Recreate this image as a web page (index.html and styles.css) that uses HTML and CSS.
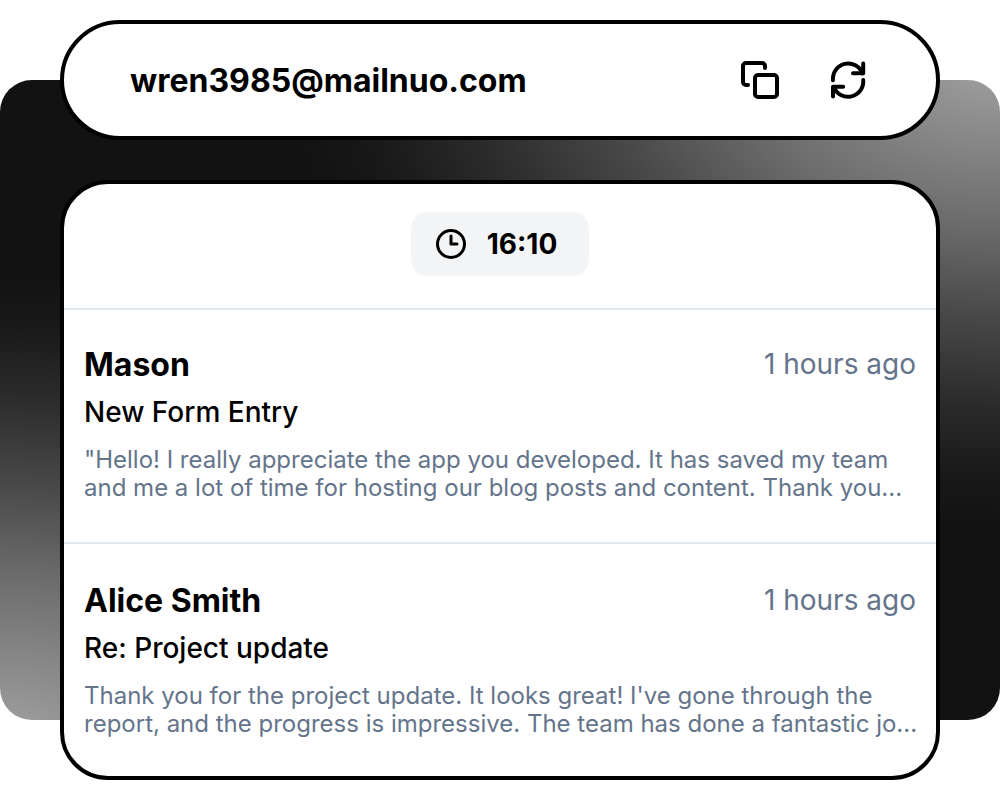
FILE: index.html
```html
<!DOCTYPE html>
<html lang="en">
<head>
  <meta charset="UTF-8" />
  <meta name="viewport" content="width=device-width, initial-scale=1.0"/>
  <title>Inbox</title>
  <link rel="stylesheet" href="styles.css">
</head>
<body>

  <main class="stage">
    <div class="backdrop"></div>

    <div class="content">
      <!-- Address -->
      <header class="address-bar">
        <span class="address">wren3985@mailnuo.com</span>
        <button class="icon-button" type="button" aria-label="Copy address">
          <svg viewBox="0 0 40 40">
            <rect x="15" y="15" width="22" height="22" rx="3"/>
            <path d="M8 25H6a3 3 0 0 1-3-3V6a3 3 0 0 1 3-3H22a3 3 0 0 1 3 3V8"/>
          </svg>
        </button>
        <button class="icon-button" type="button" aria-label="Refresh inbox">
          <svg viewBox="0 0 40 40">
            <path d="M5 20.300A15.300 15.300 0 0 1 34.500 13.300"/>
            <path d="M35.200 3.500V13.300H25"/>
            <path d="M35.200 20A15.300 15.300 0 0 1 5.700 27"/>
            <path d="M5 36.500V26.700H15.200"/>
          </svg>
        </button>
      </header>

      <!-- Messages -->
      <section class="inbox">
        <div class="inbox-head">
          <div class="timer">
            <svg viewBox="0 0 32 32">
              <circle cx="16" cy="16" r="13.500"/>
              <path d="M16 8V16H22"/>
            </svg>
            <time>16:10</time>
          </div>
        </div>

        <article class="message">
          <div class="message-top">
            <h2>Mason</h2>
            <span class="ago">1 hours ago</span>
          </div>
          <p class="subject">New Form Entry</p>
          <p class="preview">"Hello! I really appreciate the app you developed. It has saved my team<br>and me a lot of time for hosting our blog posts and content. Thank you...</p>
        </article>

        <article class="message">
          <div class="message-top">
            <h2>Alice Smith</h2>
            <span class="ago">1 hours ago</span>
          </div>
          <p class="subject">Re: Project update</p>
          <p class="preview">Thank you for the project update. It looks great! I've gone through the<br>report, and the progress is impressive. The team has done a fantastic jo...</p>
        </article>
      </section>
    </div>
  </main>

</body>
</html>
```

FILE: styles.css
```css
:root {
  --font-sans: 'Inter', sans-serif;
  --text-color: #000;
  --muted: #64748b;
  --line: #e2e8f0;
  --badge-bg: #f3f4f6;
  --glow: #a6a6a6 0%, #808080 24%, #6a6a6a 38%, #484848 56%, #2a2a2a 75%, #181818 90%, rgba(18, 18, 18, 0) 100%;
}

* {
  box-sizing: border-box;
}

body {
  margin: 0;
  font-family: var(--font-sans);
  background-color: #fff;
  color: var(--text-color);
}

.stage {
  display: grid;
}

/* backdrop and content share one grid cell */
.backdrop,
.content {
  grid-area: 1 / 1;
  min-width: 0;
}

.backdrop {
  margin: 80px 0;
  border-radius: 32px;
  background:
    radial-gradient(72% 75% at 100% -5%, var(--glow)),
    radial-gradient(72% 75% at 0% 105%, var(--glow)),
    #121212;
}

.content {
  display: flex;
  flex-direction: column;
  gap: 40px;
  padding: 20px 60px;
}

.address-bar {
  display: flex;
  align-items: center;
  gap: 48px;
  height: 120px;
  padding: 0 68px 0 66px;
  background-color: #fff;
  border: 4px solid #000;
  border-radius: 60px;
}

.address {
  flex: 1;
  font-size: 32px;
  font-weight: 700;
}

.icon-button {
  display: flex;
  padding: 0;
  border: none;
  background: transparent;
  color: inherit;
  cursor: pointer;
}

svg {
  fill: none;
  stroke: currentColor;
  stroke-width: 4;
  stroke-linecap: round;
  stroke-linejoin: round;
}

.icon-button svg {
  width: 40px;
  height: 40px;
}

.inbox {
  background-color: #fff;
  border: 4px solid #000;
  border-radius: 48px;
}

.inbox-head {
  display: flex;
  justify-content: center;
  padding: 28px 20px 32px;
}

.timer {
  display: flex;
  align-items: center;
  gap: 20px;
  height: 64px;
  padding: 0 32px 0 24px;
  background-color: var(--badge-bg);
  border-radius: 16px;
  font-size: 28px;
  font-weight: 700;
}

.timer svg {
  width: 32px;
  height: 32px;
  stroke-width: 3;
}

.message {
  padding: 34px 20px 40px;
  border-top: 2px solid var(--line);
}

.message:last-child {
  padding: 36px 20px 38px;
}

.message-top {
  display: flex;
  justify-content: space-between;
  align-items: flex-start;
}

h2 {
  margin: 0;
  font-size: 32px;
  font-weight: 700;
  line-height: 42px;
}

.ago {
  font-size: 28px;
  font-weight: 400;
  line-height: 40px;
  color: var(--muted);
}

.subject {
  margin: 6px 0 14px;
  font-size: 28px;
  font-weight: 500;
  line-height: 40px;
}

.preview {
  margin: 0;
  font-size: 24px;
  font-weight: 400;
  line-height: 28px;
  color: var(--muted);
  white-space: nowrap;
}
```
